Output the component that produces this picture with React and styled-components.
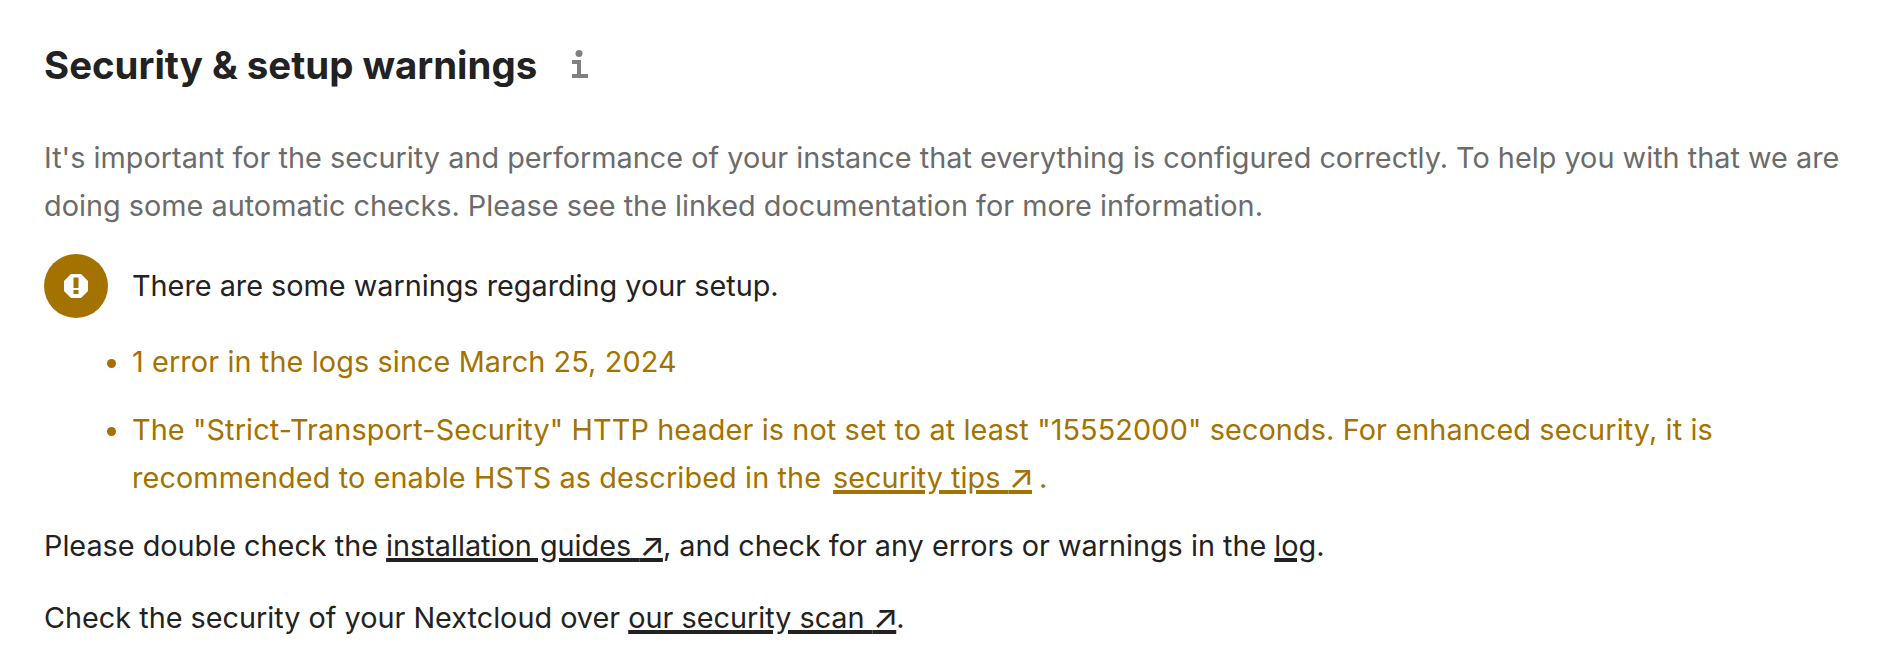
import React from 'react'
import styled, { createGlobalStyle } from 'styled-components'

const GlobalStyle = createGlobalStyle`
  html, body {
    margin: 0;
    background: #fff;
  }
  body {
    font-family: Inter, "Noto Sans", sans-serif;
    font-size: 28.8px;
    line-height: 48px;
    color: #222;
  }
`

const Section = styled.section`
  padding: 40px 30px 0 44px;
`

const TitleRow = styled.div`
  display: flex;
  align-items: center;
  gap: 34px;
  margin-bottom: 44px;
`

const Title = styled.h2`
  margin: 0;
  font-size: 38.4px;
  line-height: 50px;
  font-weight: 700;
  color: #222;
`

const HelpIcon = styled.svg`
  width: 18px;
  height: 30px;
  fill: #808080;
`

const Description = styled.p`
  margin: 0 0 24px;
  letter-spacing: 0.02px;
  color: #6b6b6b;
`

const StatusRow = styled.div`
  display: flex;
  align-items: center;
  gap: 24px;
  height: 64px;
  margin-bottom: 20px;
`

const StatusBadge = styled.span`
  width: 64px;
  height: 64px;
  border-radius: 50%;
  background: #a37200;
  display: flex;
  align-items: center;
  justify-content: center;
  flex-shrink: 0;
`

const WarningList = styled.ul`
  margin: 0 0 20px;
  padding: 0 0 0 88px;
  letter-spacing: 0.12px;
  color: #a37200;
`

const WarningItem = styled.li`
  margin-bottom: 20px;

  &:last-child {
    margin-bottom: 0;
  }
`

const Note = styled.p`
  margin: 0 0 24px;
`

const ExternalLink = styled.a`
  color: inherit;
  text-decoration: underline;
  text-decoration-thickness: 3.5px;
  text-underline-offset: 2px;
`

const TipsLink = styled(ExternalLink)`
  margin: 0 7px 0 12px;
  letter-spacing: 0;
`

const Arrow = styled.span`
  font-size: 33px;
  line-height: 0;
  letter-spacing: -2px;
`

const App = () => {
  return (
    <>
      <GlobalStyle />
      <Section>
        <TitleRow>
          <Title>Security &amp; setup warnings</Title>
          <HelpIcon viewBox="0 0 18 30">
            <circle cx="8" cy="3.5" r="3.5" />
            <path d="M1 10h9v14h7v4H1v-4h5V14H1z" />
          </HelpIcon>
        </TitleRow>
        <Description>
          It's important for the security and performance of your instance that everything is configured correctly. To help you with that we are doing some automatic checks. Please see the linked documentation for more information.
        </Description>
        <StatusRow>
          <StatusBadge>
            <svg width="24" height="24" viewBox="0 0 24 24">
              <path fill="#fff" d="M7 0h10l7 7v10l-7 7H7l-7-7V7z" />
              <path fill="#a37200" d="M9.500 3.500h5v10.500h-5zM9.500 16h5v4h-5z" />
            </svg>
          </StatusBadge>
          There are some warnings regarding your setup.
        </StatusRow>
        <WarningList>
          <WarningItem>1 error in the logs since March 25, 2024</WarningItem>
          <WarningItem>
            The "Strict-Transport-Security" HTTP header is not set to at least "15552000" seconds. For enhanced security, it is recommended to enable HSTS as described in the
            <TipsLink href="#">security tips <Arrow>↗</Arrow></TipsLink>.
          </WarningItem>
        </WarningList>
        <Note>
          Please double check the <ExternalLink href="#">installation guides <Arrow>↗</Arrow></ExternalLink>, and check for any errors or warnings in the <ExternalLink href="#">log</ExternalLink>.
        </Note>
        <Note>
          Check the security of your Nextcloud over <ExternalLink href="#">our security scan <Arrow>↗</Arrow></ExternalLink>.
        </Note>
      </Section>
    </>
  )
}

export default App
